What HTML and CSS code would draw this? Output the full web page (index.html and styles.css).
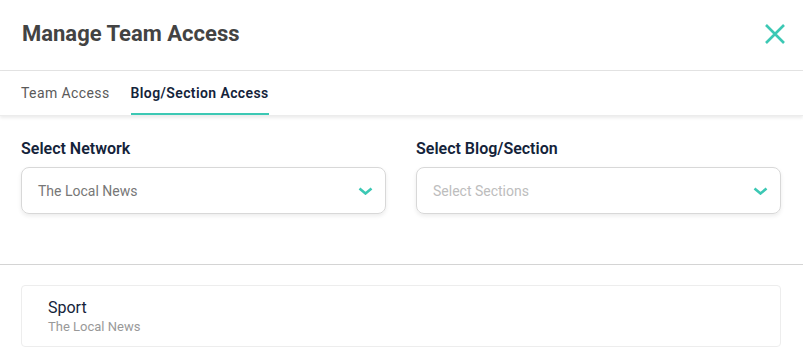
FILE: index.html
```html
<!doctype html>
<html lang="en">
  <head>
    <meta charset="UTF-8" />
    <meta name="viewport" content="width=device-width, initial-scale=1.0" />
    <title>Manage Team Access</title>
    <link rel="stylesheet" href="styles.css">
  </head>
  <body>
    <div class="modal">
      <div class="modal-header">
        <h1>Manage Team Access</h1>
        <button class="close-btn" aria-label="Close">
          <svg width="22" height="22" viewBox="0 0 22 22">
            <path d="M2 2 L20 20 M20 2 L2 20" stroke="#3cc8b4" stroke-width="2.6" fill="none" />
          </svg>
        </button>
      </div>

      <div class="tabs">
        <div class="tab">Team Access</div>
        <div class="tab active">Blog/Section Access</div>
      </div>

      <div class="filters">
        <div class="field">
          <label>Select Network</label>
          <div class="select">
            <span class="value">The Local News</span>
            <svg class="chevron" width="15" height="8" viewBox="0 0 15 8">
              <path d="M1.5 1.5 L7.5 6.5 L13.5 1.5" stroke="#3cc8b4" stroke-width="2.6" fill="none" />
            </svg>
          </div>
        </div>
        <div class="field">
          <label>Select Blog/Section</label>
          <div class="select">
            <span class="placeholder">Select Sections</span>
            <svg class="chevron" width="15" height="8" viewBox="0 0 15 8">
              <path d="M1.5 1.5 L7.5 6.5 L13.5 1.5" stroke="#3cc8b4" stroke-width="2.6" fill="none" />
            </svg>
          </div>
        </div>
      </div>

      <hr />

      <div class="list">
        <div class="list-item">
          <div class="item-title">Sport</div>
          <div class="item-sub">The Local News</div>
        </div>
      </div>
    </div>
  </body>
</html>
```

FILE: styles.css
```css
body {
  font-family: Roboto, 'Noto Sans', sans-serif;
  margin: 0;
  background: #fff;
}

.modal {
  width: 803px;
}

.modal-header {
  height: 70px;
  display: flex;
  align-items: center;
  justify-content: space-between;
  padding: 0 17px 0 22px;
  border-bottom: 1px solid #e3e3e3;
}

h1 {
  margin: 0;
  font-size: 22px;
  font-weight: 700;
  color: #434343;
  padding-bottom: 3px;
}

.close-btn {
  background: none;
  border: none;
  padding: 0;
  cursor: pointer;
  display: flex;
  margin-bottom: 2px;
}

.tabs {
  display: flex;
  gap: 21px;
  padding: 0 21px;
  height: 44px;
  box-shadow: 0 2px 3px rgba(0, 0, 0, 0.08);
  border-bottom: 1px solid #ececec;
}

.tab {
  display: flex;
  align-items: center;
  font-size: 14px;
  letter-spacing: 0.4px;
  color: #5a5a5a;
  border-bottom: 2px solid transparent;
  padding-top: 2px;
}

.tab.active {
  color: #14233a;
  font-weight: 600;
  border-bottom-color: #3cc8b4;
}

.filters {
  display: grid;
  grid-template-columns: 365px 365px;
  gap: 30px;
  padding: 23px 21px 0;
  height: 148px;
  box-sizing: border-box;
}

label {
  display: block;
  font-size: 16px;
  font-weight: 600;
  color: #14233a;
  margin-bottom: 9px;
}

.select {
  height: 47px;
  box-sizing: border-box;
  border: 1px solid #d8d8d8;
  border-radius: 8px;
  box-shadow: 0 2px 4px rgba(0, 0, 0, 0.08);
  display: flex;
  align-items: center;
  justify-content: space-between;
  padding: 0 12px 0 16px;
  font-size: 14px;
}

.value {
  color: #777;
}

.placeholder {
  color: #bdbdbd;
}

hr {
  margin: 0;
  border: none;
  height: 1px;
  background: #d4d4d4;
}

.list {
  padding: 20px 22px 0 21px;
}

.list-item {
  border: 1px solid #ededed;
  border-radius: 4px;
  padding: 12px 26px 11px;
}

.item-title {
  font-size: 16px;
  color: #14233a;
  line-height: 20px;
}

.item-sub {
  font-size: 13px;
  color: #999;
  line-height: 17px;
}
```
